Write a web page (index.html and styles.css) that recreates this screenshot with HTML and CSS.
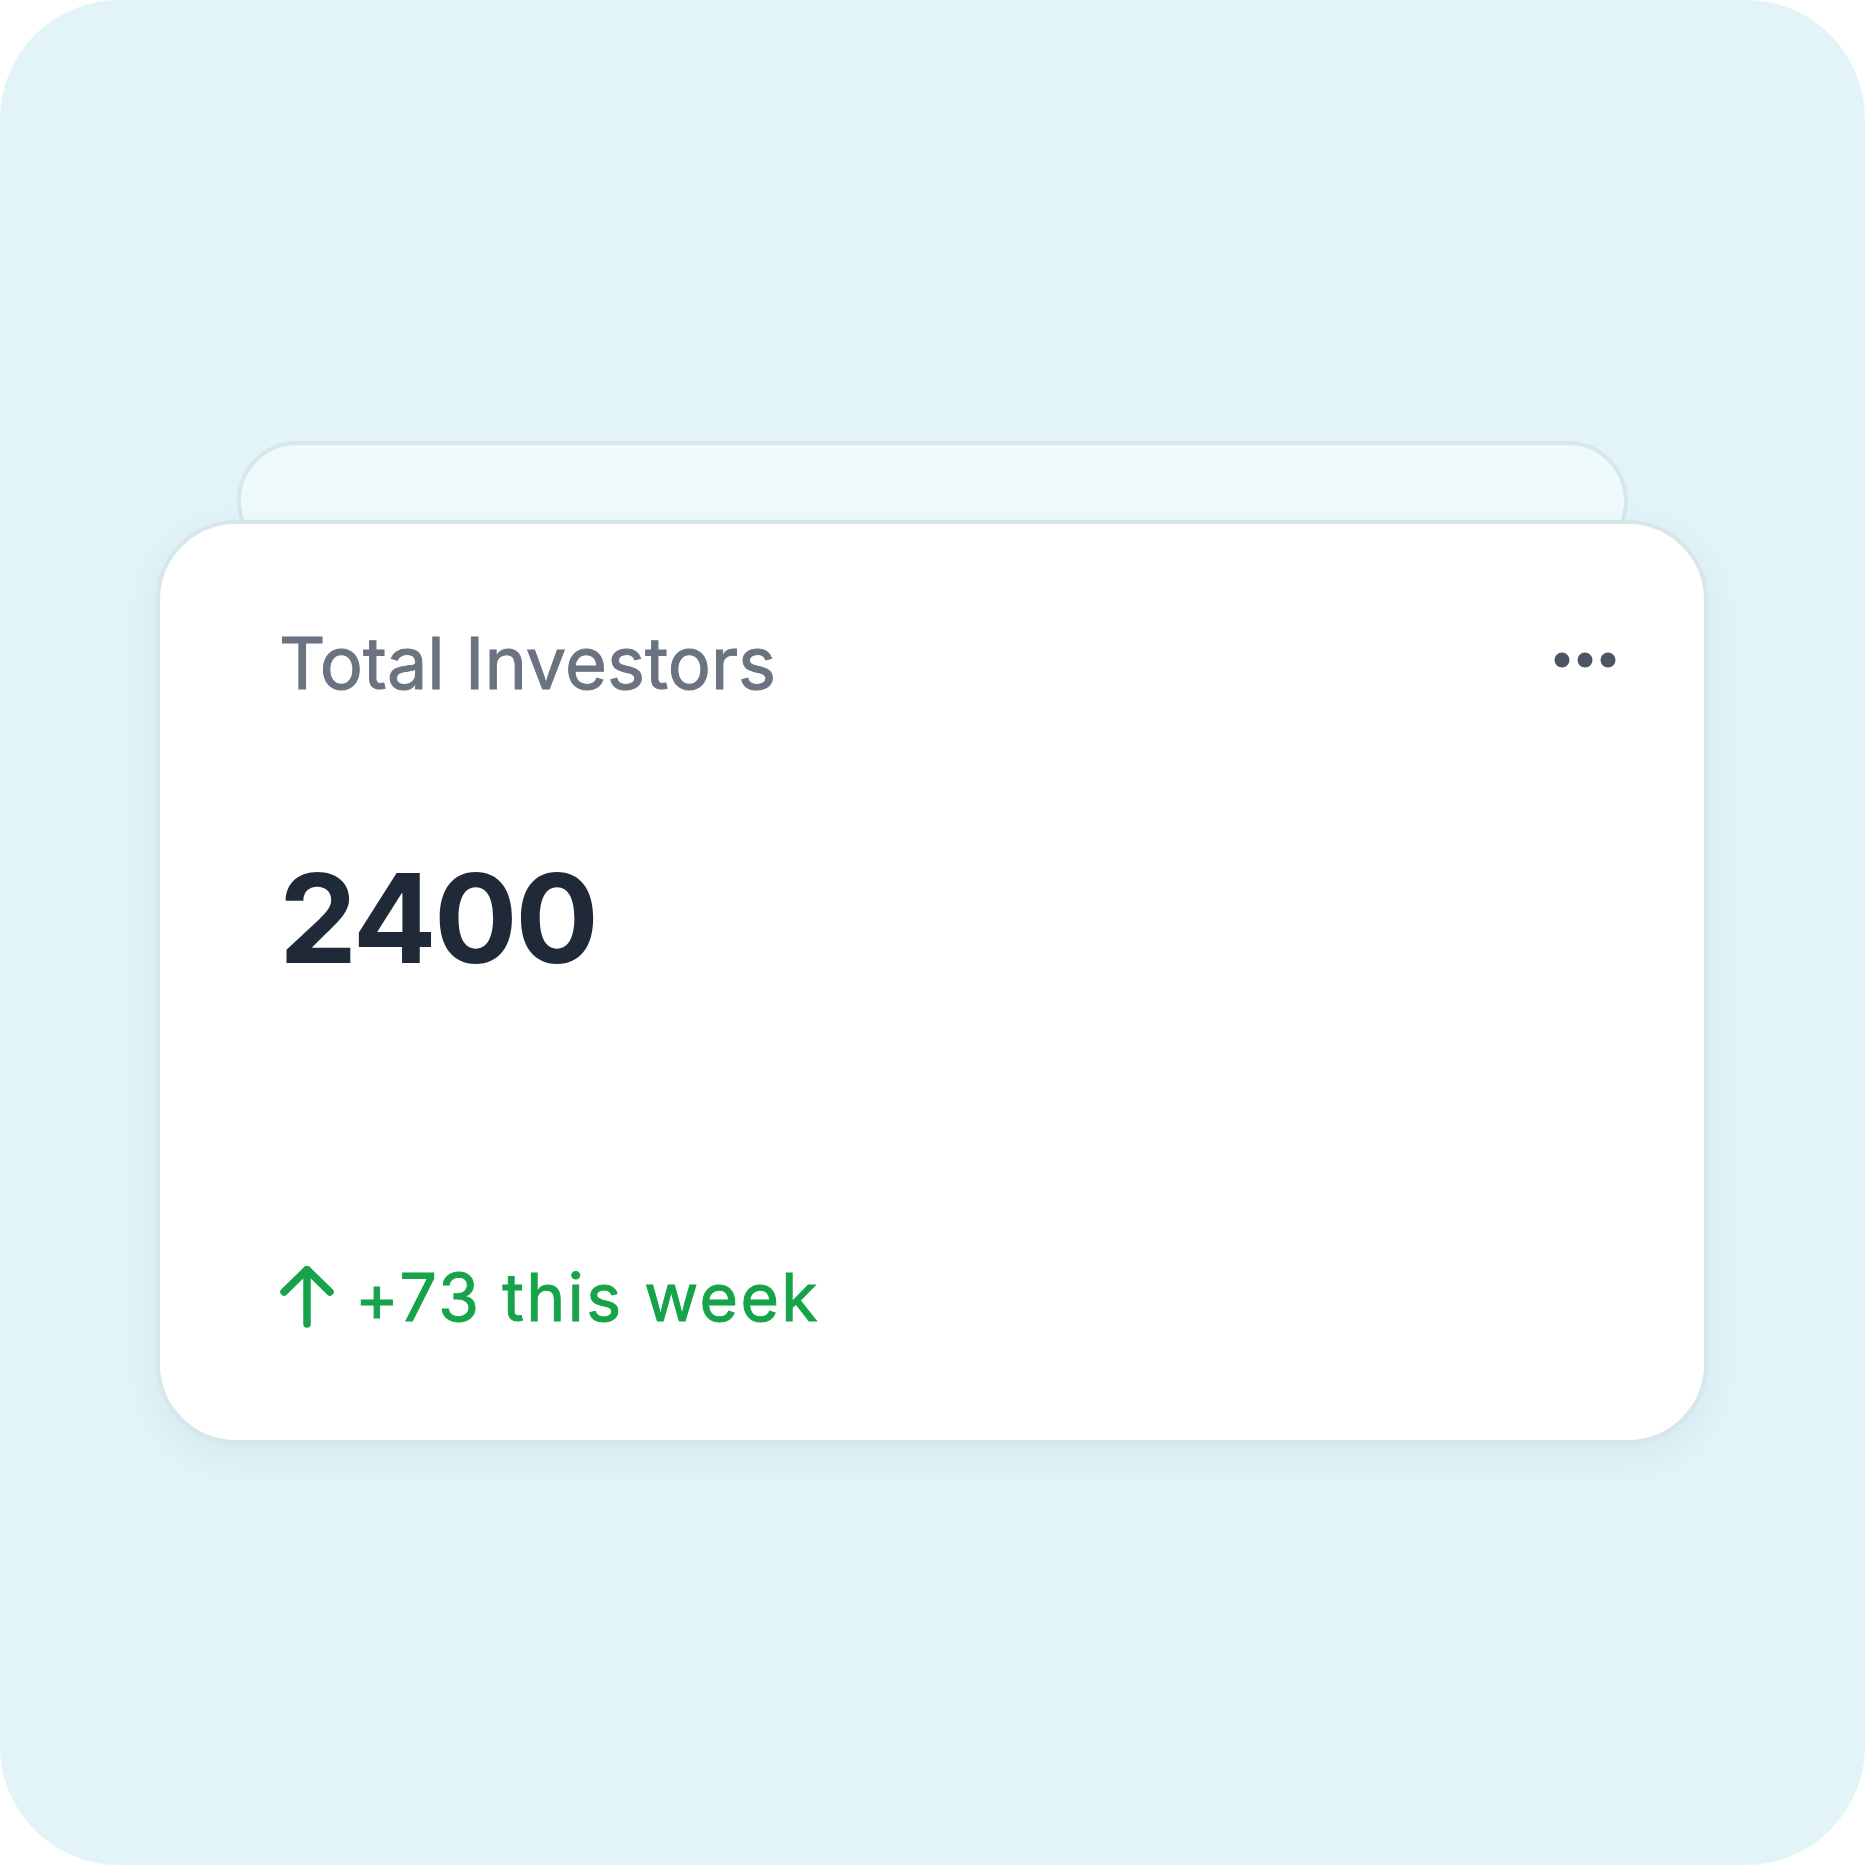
FILE: index.html
```html
<!DOCTYPE html>
<html lang="en">
<head>
<meta charset="utf-8">
<title>Total Investors</title>
<link rel="stylesheet" href="styles.css">
</head>
<body>
<div class="backdrop">
  <div class="stack">
    <div class="card-back"></div>
    <div class="card">
      <div class="card-head">
        <div class="title">Total Investors</div>
        <svg class="more" width="62" height="16" viewBox="0 0 62 16" aria-hidden="true">
          <circle cx="8" cy="8" r="7.5" fill="#4b5563"/>
          <circle cx="31" cy="8" r="7.5" fill="#4b5563"/>
          <circle cx="54" cy="8" r="7.5" fill="#4b5563"/>
        </svg>
      </div>
      <div class="value">2400</div>
      <div class="trend">
        <svg class="arrow" width="54" height="62" viewBox="0 0 54 62" aria-hidden="true">
          <path d="M27 58V5.5M4 26L27 3.5L50 26" fill="none" stroke="#16a34a" stroke-width="7.5" stroke-linecap="round" stroke-linejoin="round"/>
        </svg>
        <span class="trend-text">+73 this week</span>
      </div>
    </div>
  </div>
</div>
</body>
</html>
```

FILE: styles.css
```css
html, body {
  margin: 0;
  padding: 0;
  background: #ffffff;
}

.backdrop {
  width: 1865px;
  height: 1865px;
  border-radius: 119px;
  background: #e2f4f8;
  box-sizing: border-box;
  padding: 441px 157px 0 156px;
  font-family: Inter, "Noto Sans", sans-serif;
}

.stack {
  display: flex;
  flex-direction: column;
}

.card-back {
  height: 120px;
  margin: 0 80px 0 81px;
  background: #effafb;
  border: 4px solid #d6e8ec;
  border-radius: 80px;
  box-sizing: border-box;
}

.card {
  position: relative;
  margin-top: -41px;
  height: 924px;
  background: #ffffff;
  border: 4px solid #d6e6ea;
  border-radius: 80px;
  box-sizing: border-box;
  box-shadow: 0 12px 36px rgba(120, 170, 185, 0.14);
  padding: 96px 88px 0 119px;
  display: flex;
  flex-direction: column;
}

.card-head {
  display: flex;
  align-items: center;
  justify-content: space-between;
}

.title {
  font-size: 72px;
  line-height: 1.2;
  color: #6b7280;
  font-weight: 400;
  -webkit-text-stroke: 1px #6b7280;
}

.more {
  display: block;
  margin-top: -7px;
}

.value {
  margin-top: 138px;
  font-size: 124px;
  line-height: 1.2;
  font-weight: 700;
  letter-spacing: -0.02em;
  color: #1f2937;
}

.trend {
  margin-top: auto;
  margin-bottom: 103px;
  display: flex;
  align-items: center;
  gap: 21px;
  color: #16a34a;
}

.arrow {
  display: block;
  margin-left: 1px;
}

.trend-text {
  font-size: 66px;
  line-height: 1.2;
  letter-spacing: 2.4px;
  -webkit-text-stroke: 1px #16a34a;
}
```
